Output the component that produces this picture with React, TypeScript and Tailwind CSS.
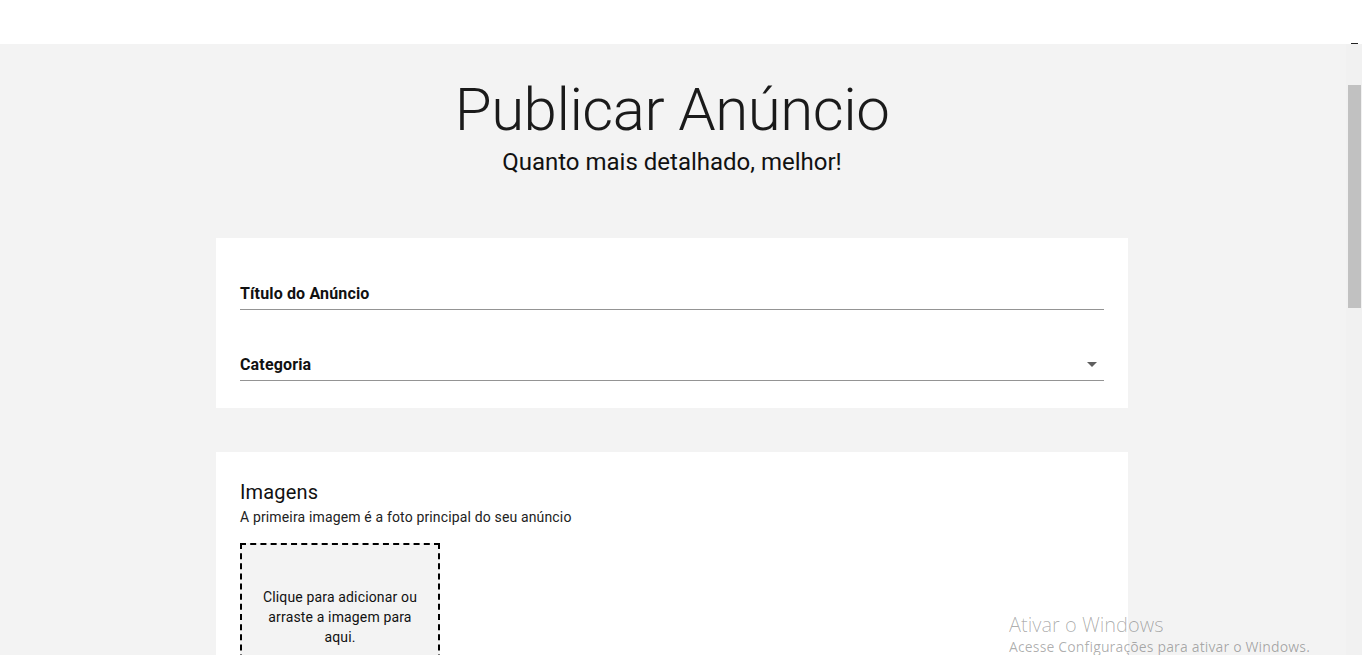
import React from "react";

function Field({ label, select }: { label: string; select?: boolean }) {
  return (
    <div className="flex items-center justify-between border-b border-[#949494] pb-[6px]">
      <span className="text-[16px] leading-[19px] font-bold tracking-[0.15px] text-[#111]">{label}</span>
      {select && (
        <svg width="10" height="5" viewBox="0 0 10 5" className="mr-[7px]">
          <path d="M0 0 L10 0 L5 5 Z" fill="#5f5f5f" />
        </svg>
      )}
    </div>
  );
}

export default function App() {
  return (
    <div
      className="relative flex h-screen w-full flex-col overflow-hidden bg-white"
      style={{ fontFamily: "Roboto, 'Noto Sans', sans-serif" }}
    >
      <header className="relative h-[44px] shrink-0 bg-white">
        <div className="absolute bottom-[0px] right-[4px] h-[1px] w-[7px] bg-[#222]" />
      </header>
      <div className="flex min-h-0 flex-1">
        <main className="flex-1 overflow-hidden bg-[#f3f3f3] pr-[2px]">
          <div className="flex flex-col items-center pt-[30px]">
            <h1 className="text-[60px] font-light leading-[72px] tracking-[-0.5px] text-[#1a1a1a]">Publicar Anúncio</h1>
            <p className="mt-[2px] text-[24px] leading-[28px] text-[#111]">Quanto mais detalhado, melhor!</p>
          </div>
          <div className="mx-auto mt-[62px] w-[912px]">
            <section className="bg-white px-[24px] pb-[27px] pt-[46px]">
              <Field label="Título do Anúncio" />
              <div className="mt-[45px]">
                <Field label="Categoria" select />
              </div>
            </section>
            <section className="mt-[44px] bg-white px-[24px] pt-[28px] pb-[40px]">
              <h2 className="text-[20px] leading-[24px] tracking-[0.15px] text-[#111]">Imagens</h2>
              <p className="mt-[3px] text-[14px] leading-[20px] tracking-[0.15px] text-[#222]">
                A primeira imagem é a foto principal do seu anúncio
              </p>
              <div className="mt-[16px] flex h-[148px] w-[200px] items-center justify-center border-2 border-dashed border-black bg-[#f3f3f3] px-[16px] text-center text-[14px] leading-[20px] tracking-[0.15px] text-[#111]">
                Clique para adicionar ou arraste a imagem para aqui.
              </div>
            </section>
          </div>
        </main>
        <div className="w-[16px] shrink-0 bg-[#f1f1f1] pt-[41px]">
          <div className="ml-[2px] h-[223px] w-[13px] bg-[#c1c1c1]" />
        </div>
      </div>
      <div
        className="pointer-events-none absolute left-[1009px] top-[611px] text-[rgba(0,0,0,0.32)]"
        style={{ fontFamily: "'Open Sans', 'Noto Sans', sans-serif" }}
      >
        <div className="text-[20px] font-light leading-[27px]">Ativar o Windows</div>
        <div className="text-[14px] leading-[18px] tracking-[0.15px]">Acesse Configurações para ativar o Windows.</div>
      </div>
    </div>
  );
}
